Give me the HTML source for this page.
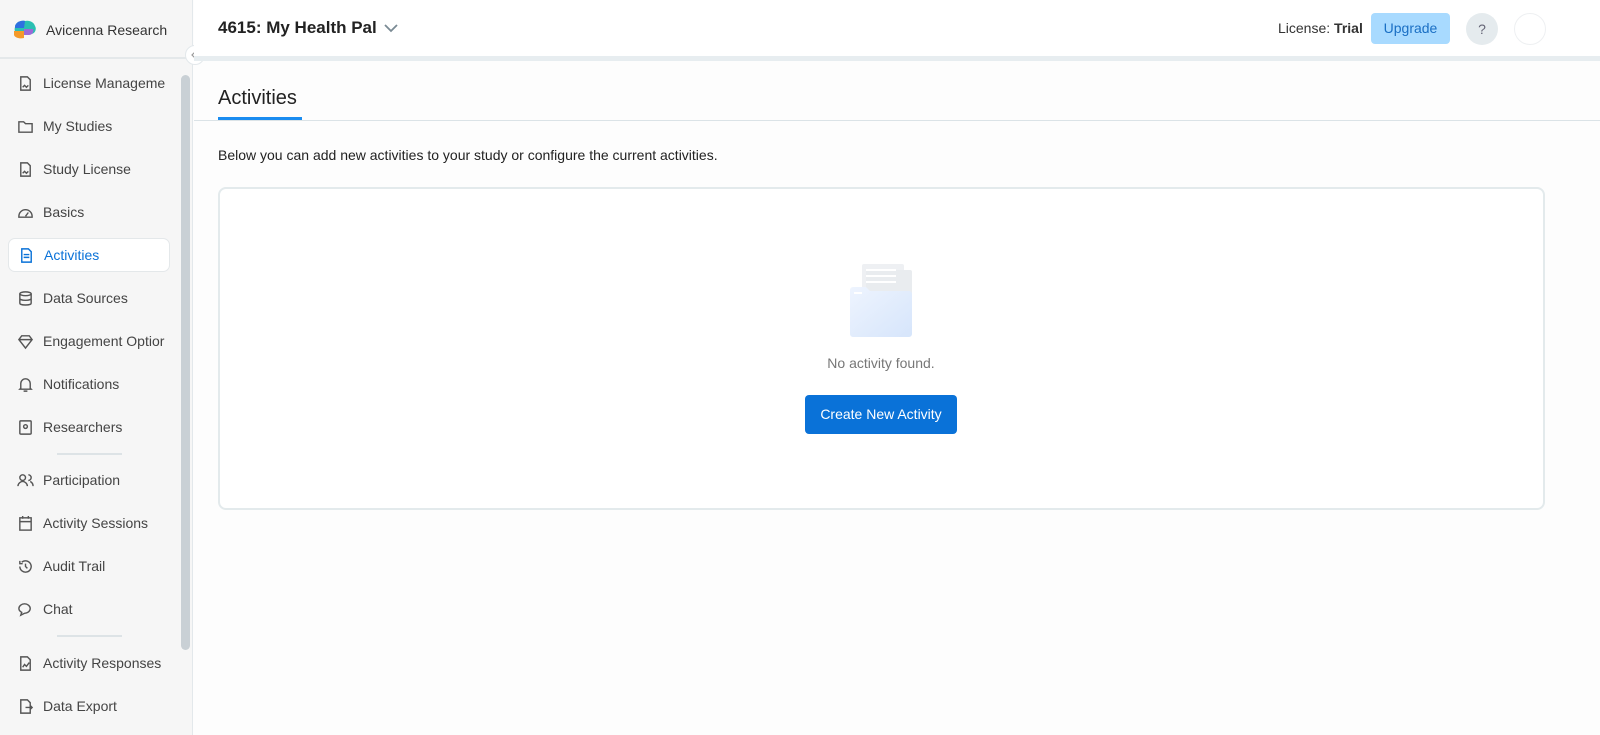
<!DOCTYPE html>
<html><head><meta charset="utf-8"><style>
*{box-sizing:border-box;margin:0;padding:0}
body{width:1600px;height:735px;overflow:hidden;font-family:"Liberation Sans",sans-serif;background:#fdfdfd;position:relative;color:#222}
.sb{position:absolute;left:0;top:0;width:193px;height:735px;background:#f6f6f6;border-right:1px solid #e3e8eb}
.logo{position:absolute;left:12px;top:19px;display:flex;align-items:center;font-size:14px;color:#333}
.sbline{position:absolute;left:0;top:57px;width:193px;height:2px;background:#e4e8ea}
.item{position:absolute;left:8px;width:162px;height:34px;display:flex;align-items:center;padding-left:9px;font-size:14px;color:#444}
.item svg{width:17px;height:17px;margin-right:9px;fill:none;stroke:#555;stroke-width:1.5}
.item.act{background:#fff;border:1px solid #e4e8ea;border-radius:7px;color:#0a72d8}
.item.act svg{stroke:#0a72d8}
.div{position:absolute;left:57px;width:65px;height:2px;background:#dde3e6}
.scr{position:absolute;left:181px;top:75px;width:9px;height:575px;background:#c9d0d5;border-radius:5px}
.col{position:absolute;left:185px;top:45px;width:20px;height:20px;border-radius:50%;background:#fff;border:1px solid #e3e8eb}
.hdr{position:absolute;left:194px;top:0;right:0;height:56px;background:#fff}
.bar{position:absolute;left:194px;top:56px;right:0;height:5px;background:#e7edf0}
.title{position:absolute;left:218px;top:18px;font-size:17px;font-weight:bold;color:#222}
.lic{position:absolute;left:1278px;top:20px;font-size:14px;color:#333}
.upg{position:absolute;left:1371px;top:13px;width:79px;height:31px;background:#a8daff;border-radius:4px;color:#1a6fc4;font-size:14px;text-align:center;line-height:31px}
.q{position:absolute;left:1466px;top:13px;width:32px;height:32px;border-radius:50%;background:#e5ebee;color:#667;text-align:center;line-height:32px;font-size:14px}
.av{position:absolute;left:1514px;top:13px;width:32px;height:32px;border-radius:50%;border:1px solid #eef0f2;background:#fff}
.tab{position:absolute;left:218px;top:87px;font-size:20px;color:#222}
.tabu{position:absolute;left:218px;top:117px;width:84px;height:3px;background:#1a8cf0}
.tabl{position:absolute;left:194px;top:120px;right:0;height:1px;background:#dbe3e7}
.desc{position:absolute;left:218px;top:147px;font-size:14px;color:#222}
.card{position:absolute;left:218px;top:187px;width:1327px;height:323px;border:2px solid #e3eaec;border-radius:8px;background:#fff}
.nf{position:absolute;left:0;width:1600px;top:355px;text-align:center;padding-left:162px;font-size:14px;color:#777}
.btn{position:absolute;left:805px;top:395px;width:152px;height:39px;background:#0a72d8;border-radius:4px;color:#fff;font-size:14px;text-align:center;line-height:39px}
</style></head><body>
<div class="sb">
<div class="logo"><svg width="26" height="22" viewBox="0 0 26 22"><path d="M3 8c0-4 5-7 10-6 4-1 9 1 10 5 2 3 0 8-4 8H6C3 15 2 11 3 8z" fill="#2bbfb2"/><path d="M3 8c0-4 5-7 10-6l-1 7H3z" fill="#2f6fe0"/><path d="M2 12h10v7c-4 1-9 0-10-3z" fill="#f59a2a"/><path d="M12 10h9c1 3-1 6-4 6h-5z" fill="#9b6ad8"/></svg><span style="margin-left:8px">Avicenna Research</span></div>
<div class="sbline"></div>
<div class="scr"></div>
<div class="item" style="top:66px"><svg viewBox="0 0 18 18"><path d="M4 2h7l3 3v11H4z M6 13l2-2 2 2 2-2"/></svg>License Manageme</div>
<div class="item" style="top:109px"><svg viewBox="0 0 18 18"><path d="M2 4h5l2 2h7v9H2z"/></svg>My Studies</div>
<div class="item" style="top:152px"><svg viewBox="0 0 18 18"><path d="M4 2h7l3 3v11H4z M6 13l2-2 2 2 2-2"/></svg>Study License</div>
<div class="item" style="top:195px"><svg viewBox="0 0 18 18"><path d="M2 13a7 7 0 0 1 14 0v1H2z M9 13l3-4"/></svg>Basics</div>
<div class="item act" style="top:238px"><svg viewBox="0 0 18 18"><path d="M4 2h7l3 3v11H4z M6 8h6M6 11h6"/></svg>Activities</div>
<div class="item" style="top:281px"><svg viewBox="0 0 18 18"><ellipse cx="9" cy="4" rx="6" ry="2"/><path d="M3 4v10c0 2.5 12 2.5 12 0V4M3 9c0 2.5 12 2.5 12 0"/></svg>Data Sources</div>
<div class="item" style="top:324px"><svg viewBox="0 0 18 18"><path d="M2 7l3-4h8l3 4-7 9z M2 7h14"/></svg>Engagement Optior</div>
<div class="item" style="top:367px"><svg viewBox="0 0 18 18"><path d="M4 13V8a5 5 0 0 1 10 0v5l1 1H3z M7 16h4"/></svg>Notifications</div>
<div class="item" style="top:410px"><svg viewBox="0 0 18 18"><rect x="3" y="2" width="12" height="14" rx="1"/><circle cx="9" cy="8" r="2"/></svg>Researchers</div>
<div class="div" style="top:453px"></div>
<div class="item" style="top:463px"><svg viewBox="0 0 18 18"><circle cx="6" cy="6" r="3"/><path d="M1 15c0-3 3-5 5-5s5 2 5 5M12 3a3 3 0 0 1 0 6M14 10c2 1 3 3 3 5"/></svg>Participation</div>
<div class="item" style="top:506px"><svg viewBox="0 0 18 18"><rect x="3" y="3" width="12" height="13"/><path d="M6 1v3M12 1v3M3 7h12"/></svg>Activity Sessions</div>
<div class="item" style="top:549px"><svg viewBox="0 0 18 18"><path d="M3 9a6 6 0 1 0 2-4.5M3 3v3h3M9 6v3l2 2"/></svg>Audit Trail</div>
<div class="item" style="top:592px"><svg viewBox="0 0 18 18"><path d="M2 8c0-3 3-5 6-5s6 2 6 5-3 5-6 5l-4 2 1-3c-2-1-3-2-3-4z"/></svg>Chat</div>
<div class="div" style="top:635px"></div>
<div class="item" style="top:646px"><svg viewBox="0 0 18 18"><path d="M4 2h7l3 3v11H4z M6 13l2-3 2 2 3-4"/></svg>Activity Responses</div>
<div class="item" style="top:689px"><svg viewBox="0 0 18 18"><path d="M4 2h7l3 3v11H4z M9 10h7M14 8l2 2-2 2"/></svg>Data Export</div>
</div>
<div class="col"><svg width="18" height="18" viewBox="0 0 18 18"><path d="M10 5l-4 4 4 4" fill="none" stroke="#999" stroke-width="1.2"/></svg></div>
<div class="hdr"></div>
<div class="bar"></div>
<div class="title">4615: My Health Pal <svg width="14" height="10" viewBox="0 0 14 10" style="margin-left:3px"><path d="M1 2l6 6 6-6" fill="none" stroke="#7a8a94" stroke-width="1.8"/></svg></div>
<div class="lic">License: <b>Trial</b></div>
<div class="upg">Upgrade</div>
<div class="q">?</div>
<div class="av"></div>
<div class="tab">Activities</div>
<div class="tabl"></div>
<div class="tabu"></div>
<div class="desc">Below you can add new activities to your study or configure the current activities.</div>
<div class="card"></div>
<svg style="position:absolute;left:846px;top:262px" width="70" height="76" viewBox="0 0 70 76"><defs><linearGradient id="g" x1="0" y1="0" x2="1" y2="1"><stop offset="0" stop-color="#eef4fe"/><stop offset="1" stop-color="#d6e5fb"/></linearGradient></defs><rect x="16" y="2" width="42" height="50" rx="2" fill="#eef0f3"/><rect x="20" y="8" width="46" height="46" rx="2" fill="#e9ecef"/><path d="M20 8h30M20 14h30M20 20h30" stroke="#fff" stroke-width="2"/><path d="M4 28a3 3 0 0 1 3-3h13l4 4h39a3 3 0 0 1 3 3v40a3 3 0 0 1-3 3H7a3 3 0 0 1-3-3z" fill="url(#g)"/><path d="M8 31h8" stroke="#fff" stroke-width="2"/></svg>
<div class="nf">No activity found.</div>
<div class="btn">Create New Activity</div>
</body></html>
